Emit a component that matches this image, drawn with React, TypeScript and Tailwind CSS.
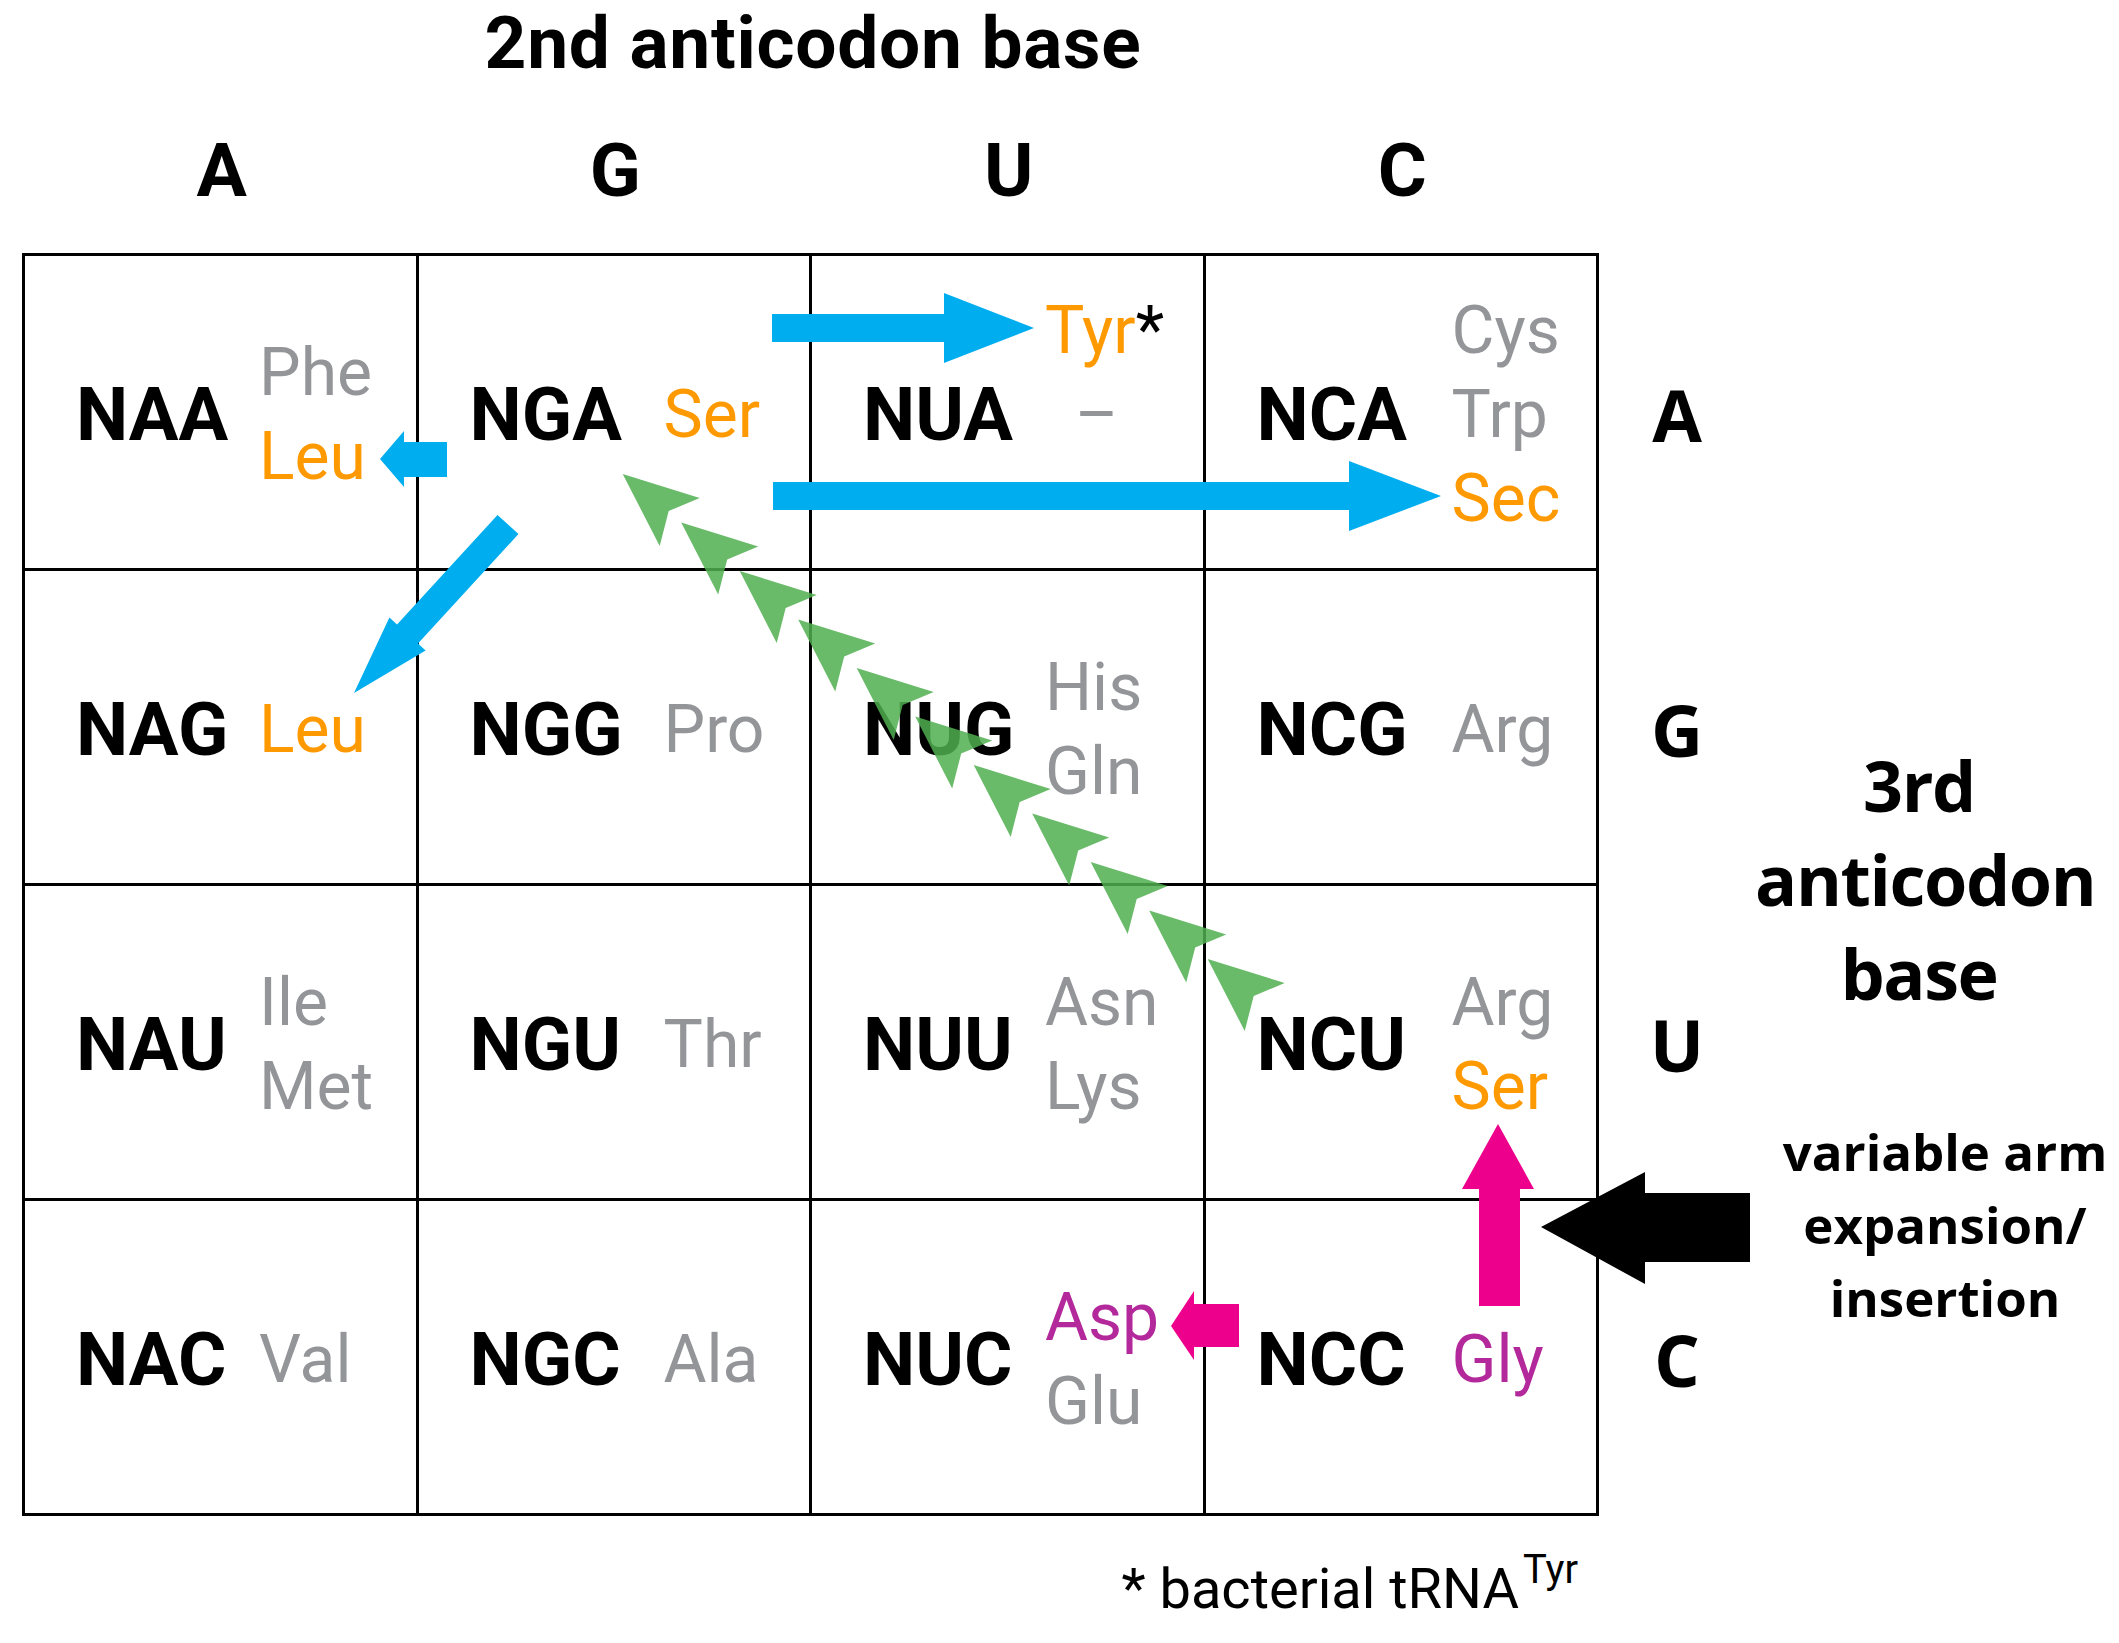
import React from "react"

type Tone = "g" | "o" | "p"

interface Line {
    text: string
    tone?: Tone
    star?: boolean
    dash?: boolean
}

interface Cell {
    codon: string
    lines: Line[]
}

const toneClass: Record<Tone, string> = {
    g: "text-[#939598]",
    o: "text-[#ff9900]",
    p: "text-[#b3299b]",
}

// codon box widths so the amino acid column starts where the reference has it
const codonWidth = ["w-[183px]", "w-[194px]", "w-[182px]", "w-[195px]"]

const rows: Cell[][] = [
    [
        { codon: "NAA", lines: [{ text: "Phe", tone: "g" }, { text: "Leu", tone: "o" }] },
        { codon: "NGA", lines: [{ text: "Ser", tone: "o" }] },
        {
            codon: "NUA",
            lines: [{ text: "Tyr", tone: "o", star: true }, { text: "–", tone: "g", dash: true }, { text: "" }],
        },
        {
            codon: "NCA",
            lines: [
                { text: "Cys", tone: "g" },
                { text: "Trp", tone: "g" },
                { text: "Sec", tone: "o" },
            ],
        },
    ],
    [
        { codon: "NAG", lines: [{ text: "Leu", tone: "o" }] },
        { codon: "NGG", lines: [{ text: "Pro", tone: "g" }] },
        { codon: "NUG", lines: [{ text: "His", tone: "g" }, { text: "Gln", tone: "g" }] },
        { codon: "NCG", lines: [{ text: "Arg", tone: "g" }] },
    ],
    [
        { codon: "NAU", lines: [{ text: "Ile", tone: "g" }, { text: "Met", tone: "g" }] },
        { codon: "NGU", lines: [{ text: "Thr", tone: "g" }] },
        { codon: "NUU", lines: [{ text: "Asn", tone: "g" }, { text: "Lys", tone: "g" }] },
        { codon: "NCU", lines: [{ text: "Arg", tone: "g" }, { text: "Ser", tone: "o" }] },
    ],
    [
        { codon: "NAC", lines: [{ text: "Val", tone: "g" }] },
        { codon: "NGC", lines: [{ text: "Ala", tone: "g" }] },
        { codon: "NUC", lines: [{ text: "Asp", tone: "p" }, { text: "Glu", tone: "g" }] },
        { codon: "NCC", lines: [{ text: "Gly", tone: "p" }] },
    ],
]

const bases = ["A", "G", "U", "C"]

function CodonCell({ cell, col }: { cell: Cell; col: number }) {
    return (
        <div className="h-[315px] border-r-[3px] border-b-[3px] border-black flex items-center pl-[51px] pt-[5px]">
            <span className={`${codonWidth[col]} shrink-0 text-[74px] leading-[84px] font-bold text-black`}>
                {cell.codon}
            </span>
            <div className="flex flex-col text-[66px] leading-[84px] font-normal">
                {cell.lines.map((line, i) => (
                    <span
                        key={i}
                        className={`h-[84px] whitespace-nowrap ${line.tone ? toneClass[line.tone] : ""} ${line.dash ? "pl-[30px]" : ""}`}
                    >
                        {line.text || "\u00a0"}
                        {line.star && <span className="text-black">*</span>}
                    </span>
                ))}
            </div>
        </div>
    )
}

// tips of the green arrowhead chain running from NCU up to Ser
const chain = Array.from({ length: 11 }, (_, k) => [622.7 + 58.5 * k, 474 + 48.5 * k])

function Arrows() {
    return (
        <svg
            className="absolute inset-0 pointer-events-none"
            width={2119}
            height={1643}
            viewBox="0 0 2119 1643"
        >
            {/* cyan: Ser -> Tyr */}
            <polygon fill="#00aeef" points="772,314 944,314 944,293 1034,328 944,363 944,342 772,342" />
            {/* cyan: Ser -> Sec */}
            <polygon fill="#00aeef" points="773,482 1349,482 1349,461 1441,496 1349,531 1349,510 773,510" />
            {/* cyan: Ser -> Leu (NAA) */}
            <polygon fill="#00aeef" points="447,442 404,442 404,431 380,459 404,487 404,477 447,477" />
            {/* cyan: Ser -> Leu (NAG) */}
            <polygon
                fill="#00aeef"
                points="497.5,514.9 518.5,534.1 418,643.6 425.6,650.5 354,693 389.4,617.5 397,624.4"
            />
            {/* green arrowheads */}
            {chain.map(([x, y], i) => (
                <polygon
                    key={i}
                    fill="#4fae4f"
                    fillOpacity={0.85}
                    points={`${x},${y} ${x + 77},${y + 24} ${x + 46},${y + 37} ${x + 37},${y + 72}`}
                />
            ))}
            {/* magenta: Gly -> Ser */}
            <polygon fill="#ec008c" points="1479,1306 1479,1189 1462,1189 1498,1124 1534,1189 1520,1189 1520,1306" />
            {/* magenta: Gly -> Asp */}
            <polygon fill="#ec008c" points="1239,1304 1194,1304 1194,1291 1171,1326 1194,1360 1194,1347 1239,1347" />
            {/* black: variable arm */}
            <polygon fill="#000000" points="1750,1193 1645,1193 1645,1172 1541,1227 1645,1284 1645,1262 1750,1262" />
        </svg>
    )
}

export default function App() {
    return (
        <div className="relative w-[2119px] h-[1643px] bg-white overflow-hidden text-black font-[family-name:Roboto,sans-serif]">
            <div className="flex pl-[22px]">
                {/* Main table */}
                <div className="w-[1577px] shrink-0 flex flex-col">
                    <div className="h-[133px] pt-[7px] pl-[5px] text-center text-[73px] leading-[73px] tracking-[0.01em] font-bold whitespace-nowrap">
                        2nd anticodon base
                    </div>
                    <div className="h-[120px] grid grid-cols-4 pl-[3px] text-[75px] leading-[75px] font-bold">
                        {bases.map((b) => (
                            <div key={b} className="text-center">
                                {b}
                            </div>
                        ))}
                    </div>
                    <div className="grid grid-cols-4 border-t-[3px] border-l-[3px] border-black">
                        {rows.map((row, ri) =>
                            row.map((cell, ci) => <CodonCell key={`${ri}-${ci}`} cell={cell} col={ci} />)
                        )}
                    </div>
                    <p className="mt-[45px] pr-[21px] text-right text-[56px] leading-[56px] font-normal whitespace-nowrap">
                        * bacterial tRNA
                        <sup className="ml-[4px] text-[40px] top-[-25px]">Tyr</sup>
                    </p>
                </div>

                {/* Row labels */}
                <div className="w-[156px] shrink-0 pt-[256px] font-[family-name:'Open_Sans',sans-serif] font-bold text-[72px] leading-[72px]">
                    {bases.map((b) => (
                        <div key={b} className="h-[315px] flex items-center justify-center">
                            {b}
                        </div>
                    ))}
                </div>

                {/* Side notes */}
                <div className="w-[364px] shrink-0 flex flex-col font-[family-name:'Open_Sans',sans-serif] font-bold">
                    <div className="mt-[738px] pr-[36px] text-center text-[70px] leading-[94px] tracking-[-0.02em]">
                        <div>3rd</div>
                        <div>anticodon</div>
                        <div>base</div>
                    </div>
                    <div className="mt-[95px] pl-[16px] text-center text-[51px] leading-[73px] whitespace-nowrap">
                        <div>variable arm</div>
                        <div>expansion/</div>
                        <div>insertion</div>
                    </div>
                </div>
            </div>
            <Arrows />
        </div>
    )
}
